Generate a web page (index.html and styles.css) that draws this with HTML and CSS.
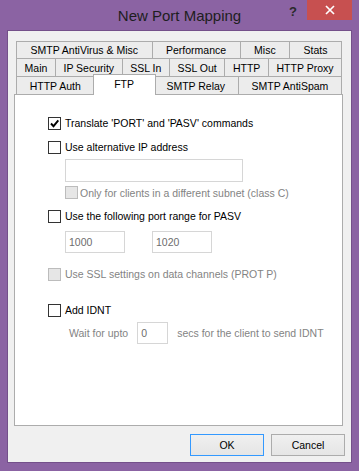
FILE: index.html
```html
<!DOCTYPE html>
<html lang="en">
<head>
    <meta charset="UTF-8">
    <title>New Port Mapping</title>
    <link rel="stylesheet" href="styles.css">
</head>
<body>
    <div class="window">
        <div class="titlebar">
            <span class="title">New Port Mapping</span>
            <span class="help">?</span>
            <span class="close">
                <svg width="10" height="10" viewBox="0 0 10 10"><path d="M1 1 L9 9 M9 1 L1 9" stroke="#fff" stroke-width="1.7"/></svg>
            </span>
        </div>

        <div class="client">
            <div class="tabs">
                <div class="tab-row first">
                    <div class="tab">SMTP AntiVirus &amp; Misc</div>
                    <div class="tab">Performance</div>
                    <div class="tab">Misc</div>
                    <div class="tab">Stats</div>
                </div>
                <div class="tab-row">
                    <div class="tab">Main</div>
                    <div class="tab">IP Security</div>
                    <div class="tab">SSL In</div>
                    <div class="tab">SSL Out</div>
                    <div class="tab">HTTP</div>
                    <div class="tab">HTTP Proxy</div>
                </div>
                <div class="tab-row">
                    <div class="tab">HTTP Auth</div>
                    <div class="tab active">FTP</div>
                    <div class="tab">SMTP Relay</div>
                    <div class="tab">SMTP AntiSpam</div>
                </div>
            </div>

            <div class="panel">
                <label class="opt">
                    <span class="box">
                        <svg width="11" height="11" viewBox="0 0 11 11"><path d="M2 5.5 L4.5 8.2 L9.3 2.4" fill="none" stroke="#000" stroke-width="1.9"/></svg>
                    </span>
                    Translate 'PORT' and 'PASV' commands
                </label>
                <label class="opt">
                    <span class="box"></span>
                    Use alternative IP address
                </label>
                <input class="field ip-field" type="text" disabled>
                <label class="opt sub disabled short">
                    <span class="box"></span>
                    Only for clients in a different subnet (class C)
                </label>

                <label class="opt range">
                    <span class="box"></span>
                    Use the following port range for PASV
                </label>
                <div class="ports">
                    <input class="field port" type="text" value="1000" disabled>
                    <input class="field port" type="text" value="1020" disabled>
                </div>

                <label class="opt disabled ssl">
                    <span class="box"></span>
                    Use SSL settings on data channels (PROT P)
                </label>

                <label class="opt idnt">
                    <span class="box"></span>
                    Add IDNT
                </label>
                <div class="wait">
                    <span>Wait for upto</span>
                    <input class="field secs" type="text" value="0" disabled>
                    <span>secs for the client to send IDNT</span>
                </div>
            </div>

            <div class="buttons">
                <button class="btn default">OK</button>
                <button class="btn">Cancel</button>
            </div>
        </div>
    </div>
</body>
</html>
```

FILE: styles.css
```css
:root {
    --frame: #8b63a3;
    --frame-dark: #74508a;
    --face: #f0f0f0;
    --edge: #acacac;
    --grey-text: #838383;
}

* {
    box-sizing: border-box;
}

body {
    margin: 0;
    background-color: var(--frame);
    font-family: 'Liberation Sans', Arial, sans-serif;
}

.window {
    width: 359px;
    height: 471px;
    display: flex;
    flex-direction: column;
}

/* title bar */

.titlebar {
    height: 31px;
    position: relative;
    display: flex;
    align-items: center;
    justify-content: center;
}

.title {
    font-size: 15px;
    color: #1e1e1e;
}

.help {
    position: absolute;
    left: 289px;
    top: 4px;
    font-size: 13px;
    font-weight: bold;
    color: #2a2a2a;
}

.close {
    position: absolute;
    left: 307px;
    top: 0;
    width: 45px;
    height: 20px;
    background-color: #c75050;
    display: flex;
    align-items: center;
    justify-content: center;
}

/* client area */

.client {
    margin: 0 8px;
    height: 431px;
    background-color: var(--face);
    box-shadow: 0 0 0 1px var(--frame-dark);
    padding: 10px 8px 0 6px;
    display: flex;
    flex-direction: column;
    font-size: 10.5px;
}

.tabs {
    margin: 0 1px 0 2px;
}

.tab-row {
    display: flex;
    height: 18px;
}

.tab-row.first {
    height: 17px;
}

.tab {
    flex: 1 1 auto;
    padding: 0 6px;
    margin-left: -1px;
    border: 1px solid var(--edge);
    border-bottom: none;
    background-color: #ececec;
    color: #000;
    display: flex;
    align-items: center;
    justify-content: center;
    white-space: nowrap;
}

.tab:first-child {
    margin-left: 0;
}

.tab.active {
    position: relative;
    z-index: 1;
    margin: -2px -2px -1px -2px;
    padding: 0 14px 2px;
    background-color: #fff;
}

.panel {
    height: 332px;
    border: 1px solid var(--edge);
    background-color: #fff;
    padding: 16px 0 0 33px;
}

/* options */

.opt {
    display: flex;
    align-items: center;
    gap: 4px;
    height: 24px;
    color: #000;
}

.box {
    width: 13px;
    height: 13px;
    flex: none;
    border: 1px solid #333;
    background-color: #fff;
    display: flex;
    align-items: center;
    justify-content: center;
}

.opt.disabled {
    color: var(--grey-text);
}

.opt.disabled .box {
    background-color: #e6e6e6;
    border-color: #bcbcbc;
}

.opt.sub {
    margin-left: 17px;
    gap: 2px;
}

.opt.short {
    height: 21px;
}

.opt.range {
    margin-top: 1px;
}

.opt.ssl {
    margin-top: 9px;
}

.opt.idnt {
    margin-top: 12px;
}

.field {
    display: block;
    height: 22px;
    border: 1px solid #d6d6d6;
    background-color: #fff;
    color: #6d6d6d;
    font-family: inherit;
    font-size: 10.5px;
    padding: 0 0 0 3px;
    margin: 0;
    outline: none;
}

.ip-field {
    width: 178px;
    height: 23px;
    margin-left: 17px;
}

.ports {
    display: flex;
    gap: 27px;
    margin: 3px 0 0 17px;
}

.port {
    width: 60px;
}

.wait {
    display: flex;
    align-items: center;
    gap: 9px;
    margin-left: 21px;
    color: var(--grey-text);
}

.secs {
    width: 31px;
}

/* dialog buttons */

.buttons {
    display: flex;
    justify-content: flex-end;
    gap: 7px;
    margin: 8px -2px 0 0;
}

.btn {
    width: 74px;
    height: 22px;
    border: 1px solid var(--edge);
    background: linear-gradient(#f0f0f0, #e5e5e5);
    font-family: inherit;
    font-size: 10.5px;
    color: #000;
    padding: 0;
}

.btn.default {
    border-color: #3399ff;
}
```
